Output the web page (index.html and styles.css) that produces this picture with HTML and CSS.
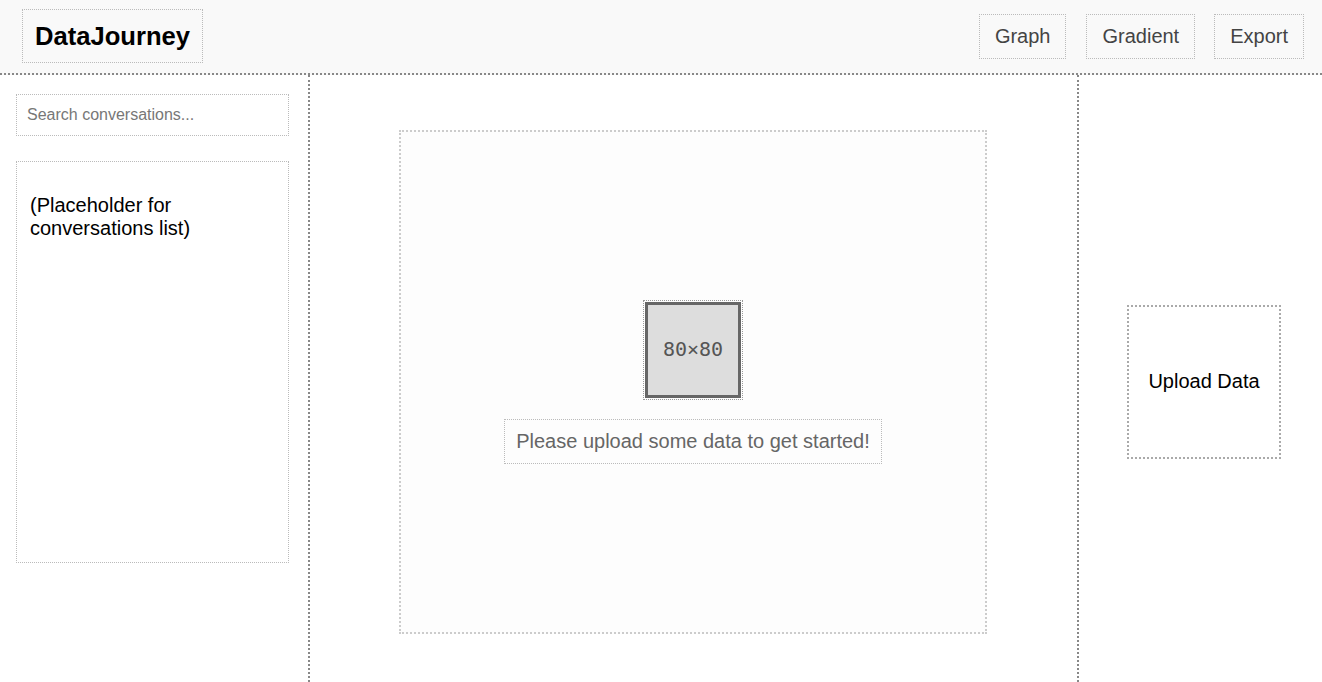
FILE: index.html
```html
<!DOCTYPE html>
<html lang="en">
<head>
<meta charset="utf-8">
<title>DataJourney</title>
<link rel="stylesheet" href="styles.css">
</head>
<body>
<header class="header">
  <div class="logo">DataJourney</div>
  <nav class="nav">
    <button class="nav-btn">Graph</button>
    <button class="nav-btn">Gradient</button>
    <button class="nav-btn">Export</button>
  </nav>
</header>
<div class="layout">
  <aside class="sidebar">
    <input class="search" type="text" placeholder="Search conversations...">
    <div class="conv-list">
      <p>(Placeholder for conversations list)</p>
    </div>
  </aside>
  <main class="main">
    <div class="stage">
      <div class="img-wrap"><div class="img-ph">80×80</div></div>
      <div class="msg">Please upload some data to get started!</div>
    </div>
  </main>
  <aside class="right">
    <div class="upload">Upload Data</div>
  </aside>
</div>
</body>
</html>
```
FILE: styles.css
```css
* { box-sizing: border-box; }
html, body { margin: 0; padding: 0; }
body {
  font-family: "Liberation Sans", Arial, sans-serif;
  background: #fff;
  color: #000;
  height: 682px;
  overflow: hidden;
}
.header {
  height: 75px;
  background: #f9f9f9;
  border-bottom: 2px dotted #888;
  display: flex;
  align-items: center;
  justify-content: space-between;
  padding: 0 18px 0 22px;
}
.logo {
  font-size: 25.6px;
  font-weight: bold;
  border: 1px dotted #bbb;
  padding: 11px 12px;
  line-height: 30px;
  height: 54px;
  margin-top: -2px;
}
.nav { display: flex; gap: 19px; margin-top: -1px; }
.nav-btn {
  font-family: "Liberation Sans", Arial, sans-serif;
  font-size: 20px;
  color: #444;
  background: transparent;
  border: 1px dotted #bbb;
  padding: 10px 15px;
  height: 45px;
  line-height: 23px;
}
.nav-btn:first-child { margin-right: 1px; }
.layout {
  display: flex;
  height: 607px;
}
.sidebar {
  width: 310px;
  flex: none;
  border-right: 2px dotted #888;
  padding: 19px 16px;
}
.search {
  display: block;
  width: 273px;
  height: 42px;
  border: 1px dotted #bbb;
  padding: 10px;
  font-family: "Liberation Sans", Arial, sans-serif;
  font-size: 16px;
  outline: none;
}
.search::placeholder { color: #777; }
.conv-list {
  width: 273px;
  height: 402px;
  margin-top: 25px;
  border: 1px dotted #bbb;
  padding: 0 12px 12px 13px;
  font-size: 20px;
  overflow: hidden;
}
.conv-list p { margin: 32px 0 0; line-height: 23px; }
.main {
  width: 769px;
  flex: none;
  border-right: 2px dotted #888;
  padding-top: 55px;
}
.stage {
  width: 588px;
  height: 504px;
  margin: 0 auto;
  position: relative;
  left: -0.5px;
  border: 2px dotted #ccc;
  background: #fdfdfd;
  display: flex;
  flex-direction: column;
  align-items: center;
  justify-content: center;
  gap: 19px;
}
.img-wrap {
  border: 1px dotted #999;
  padding: 1px;
}
.img-ph {
  width: 96px;
  height: 96px;
  border: 3px solid #666;
  background: #ddd;
  color: #555;
  font-family: "DejaVu Sans Mono", monospace;
  font-size: 20px;
  display: flex;
  align-items: center;
  justify-content: center;
  padding-bottom: 3px;
}
.msg {
  border: 1px dotted #bbb;
  padding: 10px 11px;
  font-size: 20px;
  line-height: 23px;
  color: #666;
}
.right {
  flex: 1;
  display: flex;
  align-items: center;
  justify-content: center;
  padding: 6px 0 0 7px;
}
.upload {
  width: 154px;
  height: 154px;
  border: 2px dotted #aaa;
  display: flex;
  align-items: center;
  justify-content: center;
  font-size: 20px;
  color: #000;
}
```
